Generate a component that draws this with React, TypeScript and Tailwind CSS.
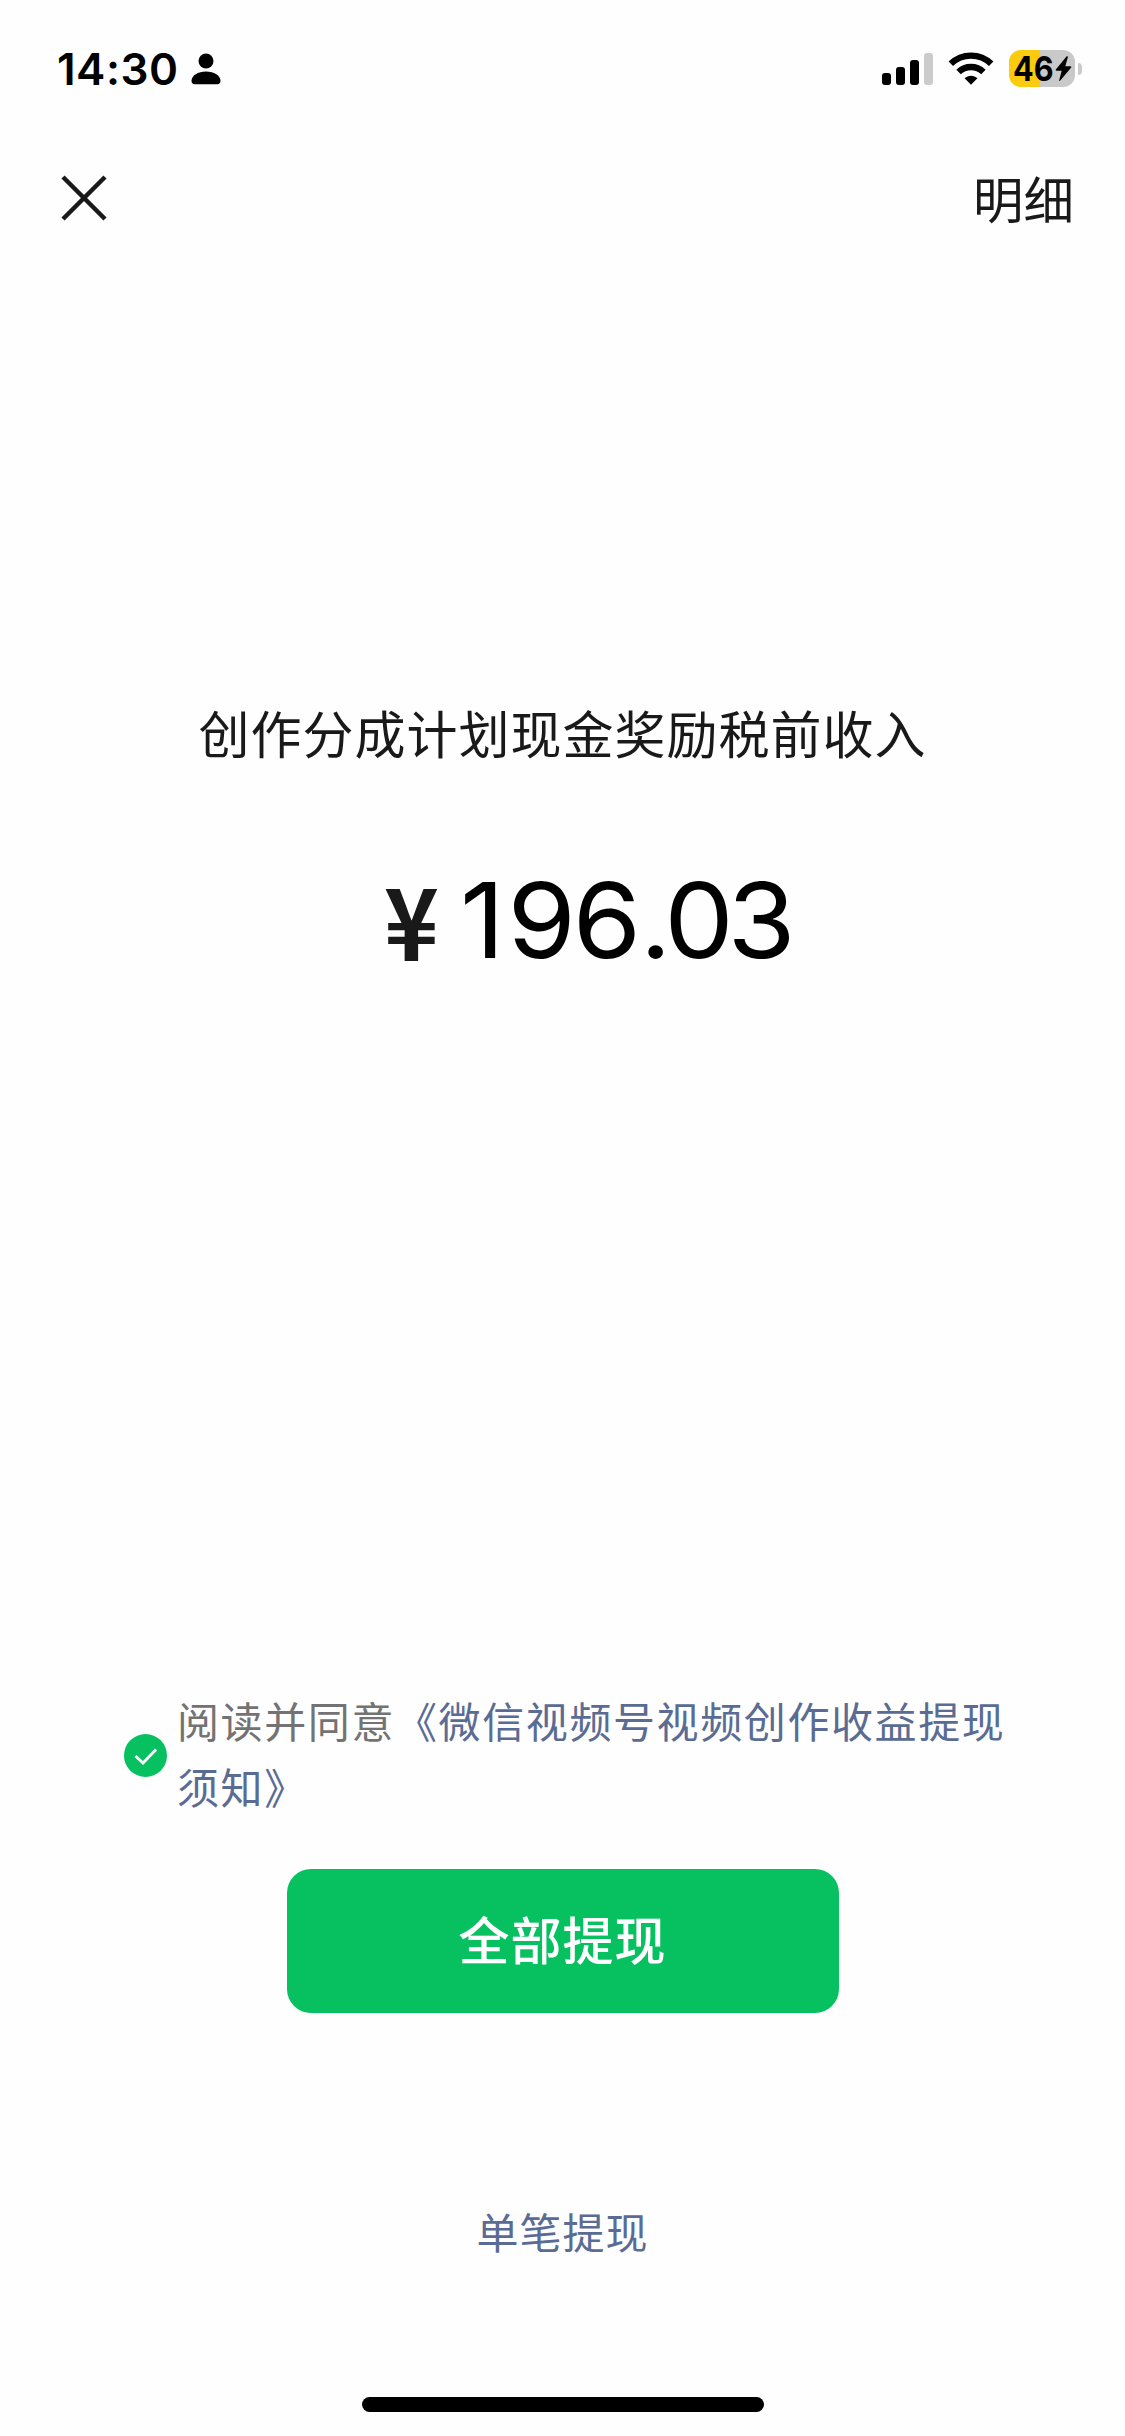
function StatusBar() {
  return (
    <header className="flex h-[138px] items-start justify-between pr-[43px] pl-[57px]">
      <div className="flex pt-[42px]">
        <span className="w-[134px] font-['Inter',sans-serif] text-[44px] leading-[54px] font-semibold tracking-[0.5px] text-black">
          14:30
        </span>
        <svg className="mt-[11px] h-[32px] w-[30px]" viewBox="0 0 30 32" fill="black">
          <circle cx="15" cy="8" r="7.5" />
          <path d="M15 18.5c8 0 14.5 4.2 14.5 9.3 0 2-1.200 3.400-3 3.400h-23c-1.800 0-3-1.400-3-3.400 0-5.100 6.500-9.300 14.500-9.300z" />
        </svg>
      </div>
      <div className="flex pt-[50px]">
        <svg className="mt-[3px] h-[32px] w-[52px]" viewBox="0 0 52 32">
          <rect x="0" y="20" width="9" height="12" rx="3" />
          <rect x="14" y="14" width="9" height="18" rx="3" />
          <rect x="28" y="7" width="9" height="25" rx="3" />
          <rect x="42" y="0" width="9" height="32" rx="3" fill="#cbcbcb" />
        </svg>
        <svg className="mt-[2px] ml-[14px] h-[33px] w-[46px]" viewBox="0 0 46 33" fill="none" stroke="black" strokeWidth="6.400">
          <path d="M2.800 11.800a29 29 0 0 1 40.400 0" />
          <path d="M10.600 20a18 18 0 0 1 24.800 0" />
          <path d="M23 32.800l-6.400-6.500c3.500-3.400 9.300-3.400 12.800 0z" fill="black" stroke="none" />
        </svg>
        <div className="ml-[15px] flex h-[37px] w-[66px] items-center rounded-[12px] bg-[linear-gradient(to_right,#facb0e_31px,#c9c9c9_31px)] pl-[4px]">
          <span className="w-[42px] origin-left scale-x-90 font-['Inter',sans-serif] text-[34px] leading-[36px] font-bold text-black">46</span>
          <svg className="h-[25px] w-[17px]" viewBox="0 0 17 25">
            <path d="M11.500 0.500L1 13.200c-.7.900-.2 1.500.7 1.500h5L4.200 24.200c-.2.800.5 1.100 1.100.4L16 11.700c.7-.9.300-1.500-.7-1.500h-5l2.600-9.200c.2-.8-.8-1.200-1.400-.5z" />
          </svg>
        </div>
        <div className="mt-[13px] ml-[3px] h-[12px] w-[4px] rounded-r-full bg-[#cbcbcb]" />
      </div>
    </header>
  );
}

function NavBar() {
  return (
    <nav className="flex h-[120px] items-center justify-between pr-[51px] pl-[61px]">
      <button aria-label="关闭">
        <svg className="h-[46px] w-[46px]" viewBox="0 0 46 46" stroke="#191919" strokeWidth="4.500">
          <path d="M2 2l42 42M44 2L2 44" />
        </svg>
      </button>
      <button className="pb-[3px] text-[50.500px] leading-[72px]">明细</button>
    </nav>
  );
}

function Agreement() {
  return (
    <div className="flex items-center pl-[124px]">
      <svg className="h-[43px] w-[43px] shrink-0" viewBox="0 0 43 43">
        <circle cx="21.500" cy="21.500" r="21.500" fill="#07c160" />
        <path d="M11.500 22l7.500 7 13-13.500" fill="none" stroke="white" strokeWidth="2.800" />
      </svg>
      <p className="-mt-[2px] mb-[2px] ml-[10px] w-[830px] text-[42px] leading-[66px] tracking-[1.6px] text-[#737373]">
        阅读并同意<a className="text-[#5a6c93]">《微信视频号视频创作收益提现<br />须知》</a>
      </p>
    </div>
  );
}

export default function App() {
  return (
    <div className="flex h-[2436px] w-[1125px] flex-col bg-[#fefefe] font-['Noto_Sans_CJK_SC',sans-serif] text-[#191919]">
      <StatusBar />
      <NavBar />
      <main className="flex flex-1 flex-col">
        <h1 className="mt-[438px] text-center text-[51px] leading-[72px] tracking-[1px]">创作分成计划现金奖励税前收入</h1>
        <div className="mt-[82px] flex h-[140px] items-center pl-[384px]">
          <span className="w-[76px] pb-[4px] text-[100px] leading-[140px] font-bold">
            <span className="inline-block origin-left scale-x-93">¥</span>
          </span>
          <span className="origin-left scale-x-105 font-['Inter',sans-serif] text-[105px] leading-[140px] text-black">
            <span className="tracking-[2.6px]">1</span>
            <span className="tracking-[-3.1px]">9</span>
            <span className="tracking-[-1.2px]">6</span>
            <span className="tracking-[-7px]">.</span>
            <span className="tracking-[-6px]">0</span>
            <span>3</span>
          </span>
        </div>
        <div className="mt-[699px]">
          <Agreement />
        </div>
        <button className="mt-[48px] h-[144px] w-[552px] self-center rounded-[24px] bg-[#07c160] pb-[5px] text-[51px] font-medium tracking-[1px] text-white">
          全部提现
        </button>
        <button className="mt-[188px] self-center text-[42px] leading-[60px] tracking-[1px] text-[#5a6c93]">单笔提现</button>
      </main>
      <div className="mb-[24px] h-[15px] w-[402px] self-center rounded-full bg-black" />
    </div>
  );
}
